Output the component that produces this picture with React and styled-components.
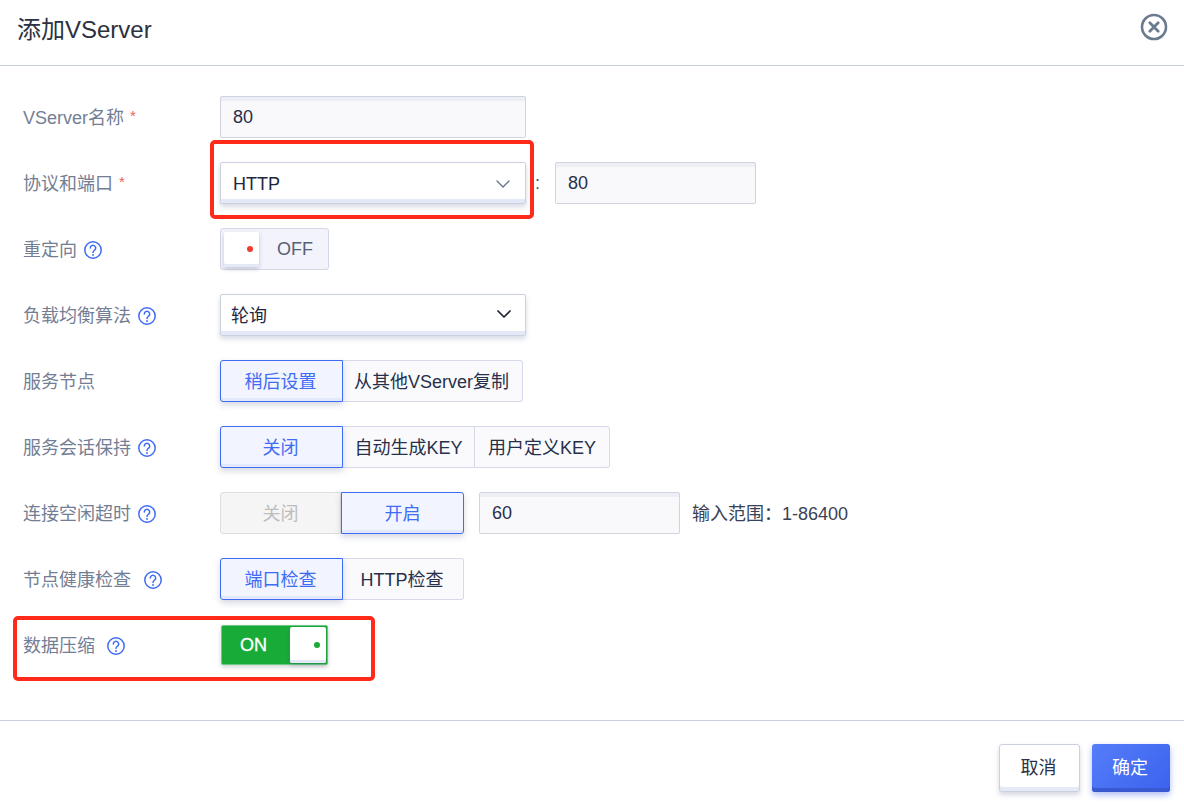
import React from 'react';
import styled, { createGlobalStyle } from 'styled-components';

const GlobalStyle = createGlobalStyle`
  html, body {
    margin: 0;
    padding: 0;
    background: #fff;
  }
  body {
    font-family: 'Liberation Sans', 'Noto Sans CJK SC', sans-serif;
    font-size: 18px;
    color: #27304a;
  }
  * {
    box-sizing: border-box;
  }
`;

const Dialog = styled.div`
  width: 1184px;
  height: 808px;
  display: flex;
  flex-direction: column;
  overflow: hidden;
`;

const Header = styled.header`
  height: 66px;
  padding: 0 16px 10px 17px;
  border-bottom: 1px solid #c9cfdf;
  display: flex;
  align-items: center;
  justify-content: space-between;
`;

const Title = styled.h1`
  margin: 0;
  font-size: 24px;
  font-weight: 400;
  color: #2b3140;
`;

const Form = styled.div`
  flex: 1;
  padding-top: 30px;
  display: flex;
  flex-direction: column;
  gap: 24px;
`;

const Row = styled.div`
  position: relative;
  height: 42px;
  display: grid;
  grid-template-columns: 220px 1fr;
  align-items: center;
`;

const Label = styled.div`
  padding: 0 0 3px 23px;
  display: flex;
  align-items: center;
  color: #737e94;
  font-size: 18px;
  white-space: nowrap;
`;

const Star = styled.span`
  color: #f0605a;
  font-size: 15px;
  margin-left: 6px;
  line-height: 1;
`;

const Controls = styled.div`
  display: flex;
  align-items: center;
`;

const Input = styled.div`
  width: ${p => p.$width}px;
  height: 42px;
  margin-left: ${p => p.$left || 0}px;
  padding: 0 12px;
  display: flex;
  align-items: center;
  background: #f9f9fc;
  border: 1px solid #d0d4e2;
  border-radius: 2px;
  box-shadow: inset 0 4px 0 #eeeff5;
  color: #27304a;
  font-size: 18px;
`;

const SelectWrap = styled.div`
  position: relative;
`;

const Select = styled.div`
  width: 306px;
  height: 42px;
  padding: ${p => (p.$dark ? '0 13px 2px 10px' : '2px 14px 0 12px')};
  display: flex;
  align-items: center;
  justify-content: space-between;
  background: #fff;
  border: 1px solid #ccd1e2;
  border-radius: 2px;
  box-shadow: inset 0 -4px 0 #e4e9f8, 0 3px 5px rgba(100, 110, 150, 0.25);
  color: #1f2740;
  font-size: 18px;
`;

const Highlight = styled.div`
  position: absolute;
  border: 4px solid #ff2a1a;
  border-radius: 5px;
  pointer-events: none;
`;

const SelectHighlight = styled(Highlight)`
  left: -10px;
  right: -8px;
  top: -22px;
  bottom: -15px;
`;

const RowHighlight = styled(Highlight)`
  left: 13px;
  top: -8px;
  width: 362px;
  height: 65px;
`;

const Colon = styled.span`
  width: 29px;
  padding-left: 9px;
  color: #4b5469;
`;

const OffSwitch = styled.div`
  width: 109px;
  height: 42px;
  padding: 3px 0 0 3px;
  display: flex;
  background: #f3f4fb;
  border: 1px solid #d3d7e8;
  border-radius: 3px;
`;

const Knob = styled.div`
  width: ${p => p.$width}px;
  height: ${p => p.$height}px;
  padding-right: 6px;
  padding-top: ${p => p.$dotTop}px;
  display: flex;
  justify-content: flex-end;
  flex-shrink: 0;
  background: #fff;
  border-radius: 2px;
  box-shadow: inset 0 -3px 0 #e4e9f8, 0 2px 4px rgba(80, 90, 120, 0.3);
`;

const Dot = styled.span`
  width: 6px;
  height: 6px;
  border-radius: 50%;
  background: ${p => p.$color};
`;

const OffText = styled.span`
  flex: 1;
  padding: 5px 0 0 18px;
  color: #566078;
  font-size: 18px;
  line-height: 24px;
`;

const OnSwitch = styled.div`
  width: 107px;
  height: 40px;
  margin: 0 0 0 1px;
  padding: 1px;
  display: flex;
  align-items: flex-start;
  justify-content: flex-end;
  position: relative;
  background: #18ab37;
  border: 1px solid #6ac986;
  border-radius: 2px;
  box-shadow: 0 2px 4px rgba(60, 80, 70, 0.25);
`;

const OnText = styled.span`
  flex: 1;
  padding: 6px 0 0 17px;
  color: #fff;
  font-size: 18px;
  line-height: 24px;
  -webkit-text-stroke: 0.3px #fff;
`;

const Segments = styled.div`
  display: flex;
  height: 42px;
`;

const Segment = styled.div`
  width: ${p => p.$width}px;
  height: 42px;
  padding-bottom: 3px;
  padding-right: ${p => p.$shift || 0}px;
  display: flex;
  align-items: center;
  justify-content: center;
  font-size: 18px;
  white-space: nowrap;
  color: #27304a;
  background: #fafafd;
  border: 1px solid #d6d9ea;
  border-left: none;

  &:first-child {
    border-left: 1px solid #d6d9ea;
    border-radius: 3px 0 0 3px;
  }
  &:last-child {
    border-radius: 0 3px 3px 0;
  }

  ${p =>
    p.$active &&
    `
    position: relative;
    color: #3f6cf4;
    background: #f2f5ff;
    border: 1px solid #3f6cf4 !important;
    box-shadow: inset 0 -3px 0 #e3e9fb, 0 3px 6px rgba(90, 100, 140, 0.25);
  `}

  ${p =>
    p.$disabled &&
    `
    color: #bdbdbd;
    background: #f5f5f5;
    border-color: #dedede !important;
  `}
`;

const Hint = styled.span`
  margin-left: 12px;
  padding-bottom: 2px;
  color: #3a4256;
  font-size: 18px;
  white-space: nowrap;
`;

const HelpButton = styled.svg`
  width: 20px;
  height: 20px;
  margin-left: ${p => p.$left}px;
  margin-top: 4px;
  flex-shrink: 0;
`;

const CloseButton = styled.svg`
  width: 30px;
  height: 30px;
  margin-right: -1px;
  margin-top: -2px;
`;

const Footer = styled.footer`
  height: 88px;
  padding: 23px 14px 0 0;
  border-top: 1px solid #c9cfe0;
  display: flex;
  justify-content: flex-end;
  gap: 12px;
`;

const CancelButton = styled.div`
  width: 81px;
  height: 48px;
  padding: 0 2px 4px 0;
  display: flex;
  align-items: center;
  justify-content: center;
  background: #fff;
  border: 1px solid #ccd1e0;
  border-radius: 3px;
  box-shadow: inset 0 -4px 0 #e6e9f6, 0 3px 5px rgba(90, 100, 130, 0.25);
  color: #2b3247;
  font-size: 18px;
`;

const ConfirmButton = styled.div`
  width: 78px;
  height: 48px;
  padding: 0 2px 4px 0;
  display: flex;
  align-items: center;
  justify-content: center;
  background: linear-gradient(135deg, #557df9, #3a62ee);
  border-radius: 3px;
  box-shadow: inset 0 -4px 0 #3a58cf, 0 3px 6px rgba(60, 90, 230, 0.4);
  color: #fff;
  font-size: 18px;
`;

const Help = ({ left = 6 }) => (
  <HelpButton $left={left} viewBox="0 0 20 20" fill="none">
    <circle cx="10" cy="10" r="8.2" stroke="#3f6cf4" strokeWidth="1.5" />
    <path
      d="M7.3 8a2.7 2.7 0 1 1 4.3 2.2c-1 .7-1.6 1.1-1.6 2.3"
      stroke="#3f6cf4"
      strokeWidth="1.5"
      strokeLinecap="round"
    />
    <circle cx="10" cy="15" r="0.95" fill="#3f6cf4" />
  </HelpButton>
);

const CloseIcon = () => (
  <CloseButton viewBox="0 0 30 30" fill="none">
    <circle cx="15" cy="15" r="12" stroke="#6c7a90" strokeWidth="2.6" />
    <path d="M10.8 10.8l8.4 8.4M19.2 10.8l-8.4 8.4" stroke="#6c7a90" strokeWidth="2.8" strokeLinecap="round" />
  </CloseButton>
);

const Chevron = ({ color, weight }) => (
  <svg width="16" height="10" viewBox="0 0 16 10" fill="none">
    <path d="M2 2l6 6 6-6" stroke={color} strokeWidth={weight} strokeLinecap="round" strokeLinejoin="round" />
  </svg>
);

const App = () => (
  <Dialog>
    <GlobalStyle />
    <Header>
      <Title>添加VServer</Title>
      <CloseIcon />
    </Header>
    <Form>
      <Row>
        <Label>
          VServer名称<Star>*</Star>
        </Label>
        <Controls>
          <Input $width={306}>80</Input>
        </Controls>
      </Row>
      <Row>
        <Label>
          协议和端口<Star>*</Star>
        </Label>
        <Controls>
          <SelectWrap>
            <Select>
              HTTP
              <Chevron color="#667085" weight={1.3} />
            </Select>
            <SelectHighlight />
          </SelectWrap>
          <Colon>:</Colon>
          <Input $width={201}>80</Input>
        </Controls>
      </Row>
      <Row>
        <Label>
          重定向
          <Help />
        </Label>
        <Controls>
          <OffSwitch>
            <Knob $width={35} $height={35} $dotTop={14}>
              <Dot $color="#f5392b" />
            </Knob>
            <OffText>OFF</OffText>
          </OffSwitch>
        </Controls>
      </Row>
      <Row>
        <Label>
          负载均衡算法
          <Help />
        </Label>
        <Controls>
          <Select $dark>
            轮询
            <Chevron color="#1a2030" weight={1.7} />
          </Select>
        </Controls>
      </Row>
      <Row>
        <Label>服务节点</Label>
        <Controls>
          <Segments>
            <Segment $active $shift={2} $width={123}>稍后设置</Segment>
            <Segment $shift={2} $width={180}>从其他VServer复制</Segment>
          </Segments>
        </Controls>
      </Row>
      <Row>
        <Label>
          服务会话保持
          <Help />
        </Label>
        <Controls>
          <Segments>
            <Segment $active $shift={2} $width={123}>关闭</Segment>
            <Segment $width={132}>自动生成KEY</Segment>
            <Segment $width={135}>用户定义KEY</Segment>
          </Segments>
        </Controls>
      </Row>
      <Row>
        <Label>
          连接空闲超时
          <Help />
        </Label>
        <Controls>
          <Segments>
            <Segment $disabled $width={121}>关闭</Segment>
            <Segment $active $width={123}>开启</Segment>
          </Segments>
          <Input $width={201} $left={15}>60</Input>
          <Hint>输入范围：1-86400</Hint>
        </Controls>
      </Row>
      <Row>
        <Label>
          节点健康检查
          <Help left={12} />
        </Label>
        <Controls>
          <Segments>
            <Segment $active $shift={2} $width={123}>端口检查</Segment>
            <Segment $shift={2} $width={121}>HTTP检查</Segment>
          </Segments>
        </Controls>
      </Row>
      <Row>
        <Label>
          数据压缩
          <Help left={11} />
        </Label>
        <Controls>
          <OnSwitch>
            <OnText>ON</OnText>
            <Knob $width={36} $height={36} $dotTop={15}>
              <Dot $color="#18ab37" />
            </Knob>
          </OnSwitch>
        </Controls>
        <RowHighlight />
      </Row>
    </Form>
    <Footer>
      <CancelButton>取消</CancelButton>
      <ConfirmButton>确定</ConfirmButton>
    </Footer>
  </Dialog>
);

export default App;
